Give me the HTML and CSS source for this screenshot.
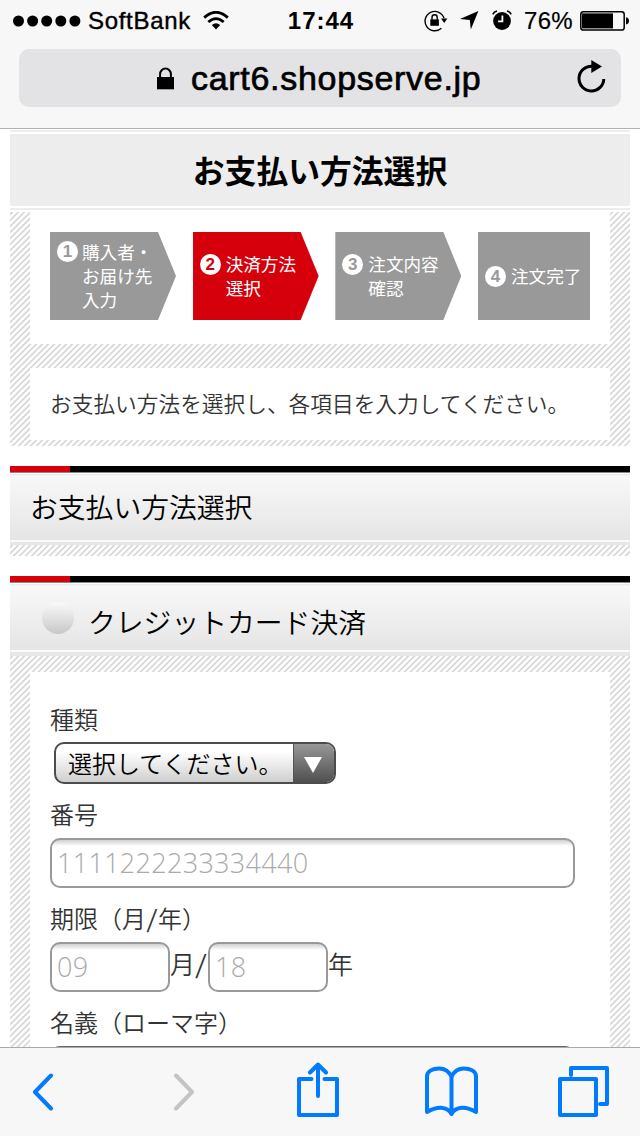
FILE: index.html
```html
<!DOCTYPE html>
<html lang="ja">
<head>
<meta charset="utf-8">
<title>お支払い方法選択</title>
<link rel="stylesheet" href="styles.css">
</head>
<body>
<div class="screen">
  <header class="chrome">
    <div class="status">
      <div class="status-left">
        <svg class="dots" width="68" height="12" viewBox="0 0 68 12"><circle cx="5.5" cy="6" r="5.5"/><circle cx="19.6" cy="6" r="5.5"/><circle cx="33.7" cy="6" r="5.5"/><circle cx="47.8" cy="6" r="5.5"/><circle cx="61.9" cy="6" r="5.5"/></svg>
        <span class="carrier">SoftBank</span>
        <svg class="wifi" width="26" height="19" viewBox="0 0 26 19" fill="none" stroke="#000"><path d="M1.2 6.6Q13-3.9 24.8 6.6" stroke-width="2.9"/><path d="M5.3 11Q13 4.2 20.7 11" stroke-width="2.8"/><path d="M13 18.4L8.8 14Q13 10.6 17.2 14Z" fill="#000" stroke="none"/></svg>
      </div>
      <span class="clock">17:44</span>
      <div class="status-right">
        <svg class="rotation" width="25" height="22" viewBox="0 0 25 22" fill="none" stroke="#000"><path d="M17.4 18.2A9.7 9.7 0 1 1 20.1 8.4" stroke-width="1.4"/><path d="M17 8.6h6.4L20.2 13Z" fill="#000" stroke="none"/><rect x="6.3" y="9.4" width="8.6" height="6.4" fill="#000" stroke="none"/><path d="M8 10V7.4a2.6 2.6 0 0 1 5.2 0V10" stroke-width="1.4"/></svg>
        <svg class="locate" width="19" height="19" viewBox="0 0 19 19"><path d="M18.4 0L10.8 18.4L9.8 8.9L0 8Z"/></svg>
        <svg class="alarm" width="20" height="20" viewBox="0 0 20 20"><circle cx="10" cy="11" r="8.9"/><path d="M.8 4.3Q2 1.7 5 1M19.2 4.3Q18 1.7 15 1" fill="none" stroke="#000" stroke-width="1.6"/><path d="M10.4 5.4v6H6.1" fill="none" stroke="#fff" stroke-width="1.8"/></svg>
        <span class="percent">76%</span>
        <svg class="battery" width="49" height="20" viewBox="0 0 49 20"><rect x=".8" y=".8" width="43.4" height="18.2" rx="2.6" fill="none" stroke="#000" stroke-width="1.5"/><rect x="2" y="2.4" width="31" height="15"/><path d="M46 6.3Q49 7 49 9.9Q49 12.8 46 13.5Z"/></svg>
      </div>
    </div>
    <div class="address">
      <svg class="lock" width="17" height="23" viewBox="0 0 17 23"><rect x="0" y="10" width="17" height="12.3"/><path d="M3.1 11V7a5.4 5.4 0 0 1 10.8 0v4" fill="none" stroke="#000" stroke-width="2"/></svg>
      <span class="host">cart6.shopserve.jp</span>
      <svg class="reload" width="29" height="33" viewBox="0 0 29 33"><path d="M26.8 19A12.4 12.4 0 1 1 15 6.2" fill="none" stroke="#000" stroke-width="3"/><path d="M14.3 0L25 6.5L14.3 13Z"/></svg>
    </div>
  </header>

  <main class="page">
    <div class="title-frame"><h1 class="title">お支払い方法選択</h1></div>
    <section class="hatched intro">
      <div class="steps">
        <div class="step arrow first"><span class="num">1</span><span class="label">購入者・<br>お届け先<br>入力</span></div>
        <div class="step arrow current"><span class="num">2</span><span class="label">決済方法<br>選択</span></div>
        <div class="step arrow"><span class="num">3</span><span class="label">注文内容<br>確認</span></div>
        <div class="step last"><span class="num">4</span><span class="label">注文完了</span></div>
      </div>
      <p class="lead">お支払い方法を選択し、各項目を入力してください。</p>
    </section>

    <section class="section">
      <h2 class="bar plain">お支払い方法選択</h2>
      <div class="hatched strip"></div>
    </section>

    <section class="section">
      <h2 class="bar option"><span class="radio"></span>クレジットカード決済</h2>
      <div class="hatched form-wrap">
        <form class="form">
          <div class="caption">種類</div>
          <div class="select"><span class="choice">選択してください。</span><span class="drop"><svg width="18" height="16" viewBox="0 0 18 16"><path d="M0 0H18L9 16Z" fill="#fff"/></svg></span></div>
          <div class="caption number-caption">番号</div>
          <div class="input">1111222233334440</div>
          <div class="caption field-caption">期限（月<span class="slash">/</span>年）</div>
          <div class="expiry"><div class="input short">09</div><span class="unit month">月<span class="slash">/</span></span><div class="input short">18</div><span class="unit">年</span></div>
          <div class="caption field-caption">名義（ローマ字）</div>
          <div class="input name-input"></div>
        </form>
      </div>
    </section>
  </main>

  <nav class="toolbar">
    <svg width="22" height="38" viewBox="0 0 22 38"><path d="M19 2.5L3 19L19 35.5"/></svg>
    <svg class="forward" width="22" height="38" viewBox="0 0 22 38"><path d="M3 2.5L19 19L3 35.5"/></svg>
    <svg class="share" width="42" height="56" viewBox="0 0 42 56"><path d="M14.5 17H2V53H40V17H27.5M21 34V3M13 10.5L21 2.5L29 10.5"/></svg>
    <svg class="book" width="53" height="52" viewBox="0 0 53 52"><path d="M26.5 48V11C24 5 19 2.5 14 2.5C8 2.5 2 5 2 10V46C12 40 22 40 26.5 48C31 40 41 40 51 46V10C51 5 45 2.5 39 2.5C34 2.5 29 5 26.5 11"/></svg>
    <svg class="tabs" width="52" height="52" viewBox="0 0 52 52"><path d="M2 13H38V49H2ZM13 9V2H49V38H42"/></svg>
  </nav>
</div>
</body>
</html>
```

FILE: styles.css
```css
* { box-sizing: border-box; }
body { margin: 0; }
svg { display: block; flex: none; }
h1, h2, p { margin: 0; font-weight: 350; }

.screen {
  width: 640px;
  height: 1136px;
  display: flex;
  flex-direction: column;
  overflow: hidden;
  background: #fff;
  font-family: "Noto Sans CJK JP", sans-serif;
  font-weight: 350;
}

/* Browser chrome */
.chrome {
  flex: none;
  height: 129px;
  background: #f7f7f7;
  border-bottom: 1px solid #b2b2b2;
  font-family: "Liberation Sans", Arial, sans-serif;
  font-weight: 400;
  color: #000;
}
.status {
  height: 49px;
  padding: 0 11px 0 13px;
  display: grid;
  grid-template-columns: 1fr auto 1fr;
  font-size: 24px;
  line-height: 41px;
}
.status-left, .status-right { display: flex; height: 41px; align-items: center; }
.status-right { justify-content: flex-end; }
.carrier { margin-left: 7px; letter-spacing: .7px; -webkit-text-stroke: .4px #000; }
.wifi { margin: 0 0 1px 12px; }
.clock { font-weight: 700; letter-spacing: 1px; }
.locate { margin-left: 11px; }
.alarm { margin: 0 0 2px 13px; }
.percent { margin-left: 12px; letter-spacing: .3px; -webkit-text-stroke: .2px #000; }
.battery { margin-left: 7px; }

.address {
  height: 58px;
  margin: 0 19px;
  padding: 0 15px 0 138px;
  border-radius: 10px;
  background: #e3e3e5;
  display: flex;
  align-items: center;
}
.host { margin-left: 17px; font-size: 34px; line-height: 57px; letter-spacing: .7px; -webkit-text-stroke: .7px #000; }
.reload { margin: 0 0 4px auto; }

/* Shop page */
.page { flex: 1; min-height: 0; overflow: hidden; padding: 1px 10px 0; }
.title-frame { border: solid #ededed; border-width: 2px 0; padding: 2px 0; }
.title {
  height: 72px;
  background: #ededed;
  text-align: center;
  font-size: 31.8px;
  line-height: 70px;
  font-weight: 700;
}
.hatched {
  background: linear-gradient(135deg, #fff 0 6%, #d8d8d8 15% 25%, #fff 36% 56%, #d8d8d8 65% 75%, #fff 86%) 0 0 / 6px 6px;
}
.intro {
  margin-top: 2px;
  padding: 0 20px 6px;
  display: flex;
  flex-direction: column;
  gap: 24px;
}
.steps {
  height: 132px;
  padding: 20px 20px 24px;
  background: #fff;
  display: grid;
  grid-template-columns: 126px 126px 126px 112px;
  justify-content: space-between;
}
.step {
  padding-left: 7px;
  display: flex;
  align-items: center;
  background: #999;
  color: #fff;
  font-size: 17.6px;
  line-height: 24px;
  font-weight: 400;
}
.arrow { clip-path: polygon(0 0, 108px 0, 126px 50%, 108px 100%, 0 100%); }
.current { background: #d5000b; }
.num {
  width: 21px;
  height: 21px;
  margin: 0 5px 24px 0;
  flex: none;
  border-radius: 50%;
  background: #fff;
  color: #999;
  text-align: center;
  font: 700 17px/21px "Liberation Sans", Arial, sans-serif;
}
.first .num { margin: 0 4px 50px 0; }
.last .num { margin-bottom: 0; }
.current .num { color: #d5000b; }
.label { white-space: nowrap; }
.lead {
  height: 72px;
  padding-left: 20px;
  background: #fff;
  color: #333;
  font-size: 21.7px;
  line-height: 70px;
  white-space: nowrap;
}

.section { padding-top: 20px; }
.bar {
  height: 80px;
  border-top: 6px solid #000;
  border-image: linear-gradient(90deg, #d5000b 60px, #000 60px) 6 0 0 0;
  background: linear-gradient(#888 0 1px, #fff 1px 2px, #ececec 2px 3px, #f8f8f8 4px, #e5e5e5 68px, #fafafa 68px 70px, #e7e7e7 70px);
  background-origin: padding-box;
  color: #000;
  font-size: 27.8px;
  white-space: nowrap;
}
.plain { height: 79px; padding-left: 20px; line-height: 69px; }
.option { display: flex; padding-left: 32px; line-height: 79px; }
.radio {
  width: 32px;
  height: 32px;
  margin: 20px 14px 0 0;
  border-radius: 50%;
  background: linear-gradient(#fafafa, #c8c8c8);
}
.strip { height: 11px; }
.form-wrap { padding: 16px 20px 0; }
.form { height: 400px; padding: 31px 20px 0; background: #fff; color: #333; }
.caption { height: 31px; font-size: 24px; line-height: 31px; white-space: nowrap; }
.slash { display: inline-block; width: 12px; text-align: center; transform: scaleX(1.2); }
.select {
  width: 282px;
  height: 42px;
  margin: 8px 0 0 4px;
  display: flex;
  border: 2px solid #4c4c4c;
  border-radius: 10px;
  overflow: hidden;
  background: linear-gradient(#fff, #fff 20%, #cfcfcf);
}
.choice {
  flex: 1;
  padding-left: 12px;
  color: #000;
  font-size: 24px;
  line-height: 37px;
  white-space: nowrap;
}
.drop {
  width: 41px;
  flex: none;
  display: flex;
  align-items: center;
  justify-content: center;
  padding: 3px 3px 0 0;
  border-left: 1px solid #555;
  background: linear-gradient(#979797, #505050);
}
.number-caption { margin-top: 14px; }
.input {
  width: 525px;
  height: 50px;
  margin-top: 9px;
  padding-left: 5px;
  border: 2px solid #999;
  border-radius: 10px;
  background: linear-gradient(#d0d0d0, #fff 6px);
  color: #aaa;
  font: 300 27px/45px "Open Sans", sans-serif;
  letter-spacing: .3px;
}
.field-caption { margin-top: 14px; }
.expiry { display: flex; margin-top: 9px; }
.short { width: 120px; margin-top: 0; flex: none; }
.unit { width: 26px; font-size: 25px; line-height: 42px; white-space: nowrap; }
.month { width: 38px; }
.name-input { border-color: #666; }

/* Bottom toolbar */
.toolbar {
  flex: none;
  height: 89px;
  padding: 0 30px 0 32px;
  border-top: 1px solid #aaa;
  background: #f7f7f7;
  display: flex;
  align-items: center;
  fill: none;
  stroke: #007aff;
  stroke-width: 4;
  stroke-linecap: round;
  stroke-linejoin: round;
}
.forward { margin-left: 119px; stroke: #c4c4c4; }
.share { margin: 0 0 4px 102px; }
.book { margin-left: 86px; }
.tabs { margin: 0 0 0 auto; }
```
